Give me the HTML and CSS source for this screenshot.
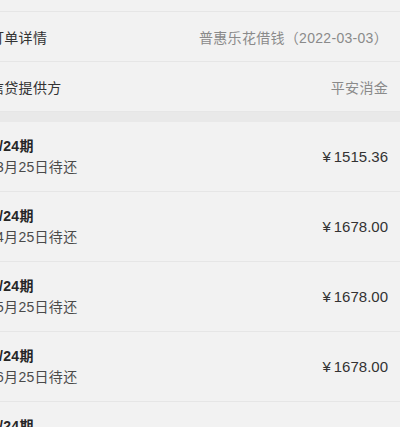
FILE: index.html
```html
<!DOCTYPE html>
<html lang="zh-CN">
<head>
<meta charset="utf-8">
<title>订单详情</title>
<link rel="stylesheet" href="styles.css">
</head>
<body>
<div class="page">
  <div class="top-gap"></div>
  <div class="info-row">
    <span class="label">订单详情</span>
    <span class="value">普惠乐花借钱（2022-03-03）</span>
  </div>
  <div class="info-row">
    <span class="label">信贷提供方</span>
    <span class="value">平安消金</span>
  </div>
  <div class="band"></div>
  <ul class="plan">
    <li class="plan-item">
      <div class="plan-left">
        <div class="plan-title">1/24期</div>
        <div class="plan-date">3月25日待还</div>
      </div>
      <div class="plan-amount"><span class="yen">¥</span>1515.36</div>
    </li>
    <li class="plan-item">
      <div class="plan-left">
        <div class="plan-title">2/24期</div>
        <div class="plan-date">4月25日待还</div>
      </div>
      <div class="plan-amount"><span class="yen">¥</span>1678.00</div>
    </li>
    <li class="plan-item">
      <div class="plan-left">
        <div class="plan-title">3/24期</div>
        <div class="plan-date">5月25日待还</div>
      </div>
      <div class="plan-amount"><span class="yen">¥</span>1678.00</div>
    </li>
    <li class="plan-item">
      <div class="plan-left">
        <div class="plan-title">4/24期</div>
        <div class="plan-date">6月25日待还</div>
      </div>
      <div class="plan-amount"><span class="yen">¥</span>1678.00</div>
    </li>
    <li class="plan-item">
      <div class="plan-left">
        <div class="plan-title">5/24期</div>
        <div class="plan-date">7月25日待还</div>
      </div>
      <div class="plan-amount"><span class="yen">¥</span>1678.00</div>
    </li>
  </ul>
</div>
</body>
</html>
```
FILE: styles.css
```css
html, body {
  margin: 0;
  padding: 0;
  background: #f2f2f2;
  overflow: hidden;
}
body {
  font-family: "Liberation Sans", "Noto Sans CJK SC", sans-serif;
  font-size: 14px;
  letter-spacing: 0.3px;
  color: #333;
}
.page {
  margin-left: -10px;
  width: 410px;
}
.top-gap {
  height: 11px;
  border-bottom: 1px solid #e6e6e6;
}
.info-row {
  height: 49px;
  display: flex;
  align-items: center;
  justify-content: space-between;
  padding-right: 12px;
  border-bottom: 1px solid #e6e6e6;
}
.label {
  color: #333;
}
.value {
  color: #8a8a8a;
}
.band {
  height: 10px;
  background: #e9e9e9;
}
.plan {
  list-style: none;
  margin: 0;
  padding: 0;
}
.plan-item {
  height: 69px;
  display: flex;
  align-items: center;
  justify-content: space-between;
  padding-left: 1px;
  padding-right: 12px;
  border-bottom: 1px solid #e6e6e6;
}
.plan-left {
  display: flex;
  flex-direction: column;
  padding-top: 1px;
}
.plan-title {
  line-height: 21px;
  font-weight: bold;
  color: #262626;
}
.plan-date {
  line-height: 21px;
  color: #4a4a4a;
  padding-left: 5px;
}
.plan-amount {
  font-size: 15px;
  letter-spacing: 0;
  color: #333;
}
.yen {
  margin-right: 3px;
}
```
